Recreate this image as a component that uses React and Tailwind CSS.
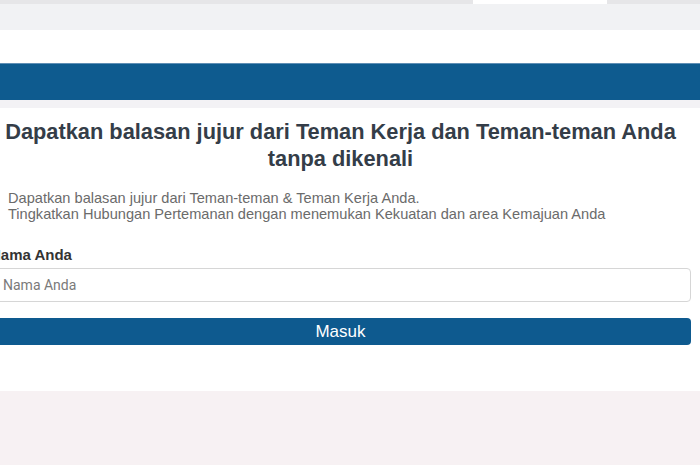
export default function App() {
    return (
        <div className="w-[700px] h-[465px] overflow-hidden bg-[#f7f1f3] font-['Liberation_Sans',Arial,sans-serif]">
            {/* browser chrome remnants */}
            <div className="flex h-[4px]">
                <div className="w-[473px] bg-[#e6e6e8]" />
                <div className="w-[134px] bg-white" />
                <div className="flex-1 bg-[#e6e6e8]" />
            </div>
            <div className="h-[26px] bg-[#f1f2f4]" />
            <div className="h-[33px] bg-white" />

            {/* header bar */}
            <div className="h-[37px] bg-[#0e5b8f] border-t border-[#5f8fb5]" />
            <div className="h-[8px] bg-[#f3f2f5]" />

            <main className="h-[283px] bg-white pt-[10px]">
                <div className="ml-[-10px] w-[701px]">
                    <h1 className="text-center text-[21.8px] leading-[27px] font-bold text-[#343d48]">
                        Dapatkan balasan jujur dari Teman Kerja dan Teman-teman Anda
                        <br />
                        tanpa dikenali
                    </h1>

                    <p className="mt-[18px] pl-[18px] text-[14.6px] leading-[16px] text-[#6b6b6b]">
                        Dapatkan balasan jujur dari Teman-teman &amp; Teman Kerja Anda.
                        <br />
                        Tingkatkan Hubungan Pertemanan dengan menemukan Kekuatan dan area Kemajuan Anda
                    </p>

                    <form className="mt-[23px]" onSubmit={(e) => e.preventDefault()}>
                        <label className="block text-[15px] leading-[20px] font-bold text-[#333]">
                            Nama Anda
                        </label>
                        <input
                            type="text"
                            placeholder="Nama Anda"
                            className="mt-[3px] block w-full h-[34px] px-[12px] rounded-[4px] border border-[#d6d6d6] bg-white font-['Roboto',sans-serif] text-[14px] text-[#555] placeholder:text-[#7a7a7a] outline-none"
                        />
                        <button
                            type="submit"
                            className="mt-[16px] block w-full h-[27px] rounded-[4px] bg-[#0e5a8f] text-white text-[17px] leading-[27px]"
                        >
                            Masuk
                        </button>
                    </form>
                </div>
            </main>
        </div>
    );
}
